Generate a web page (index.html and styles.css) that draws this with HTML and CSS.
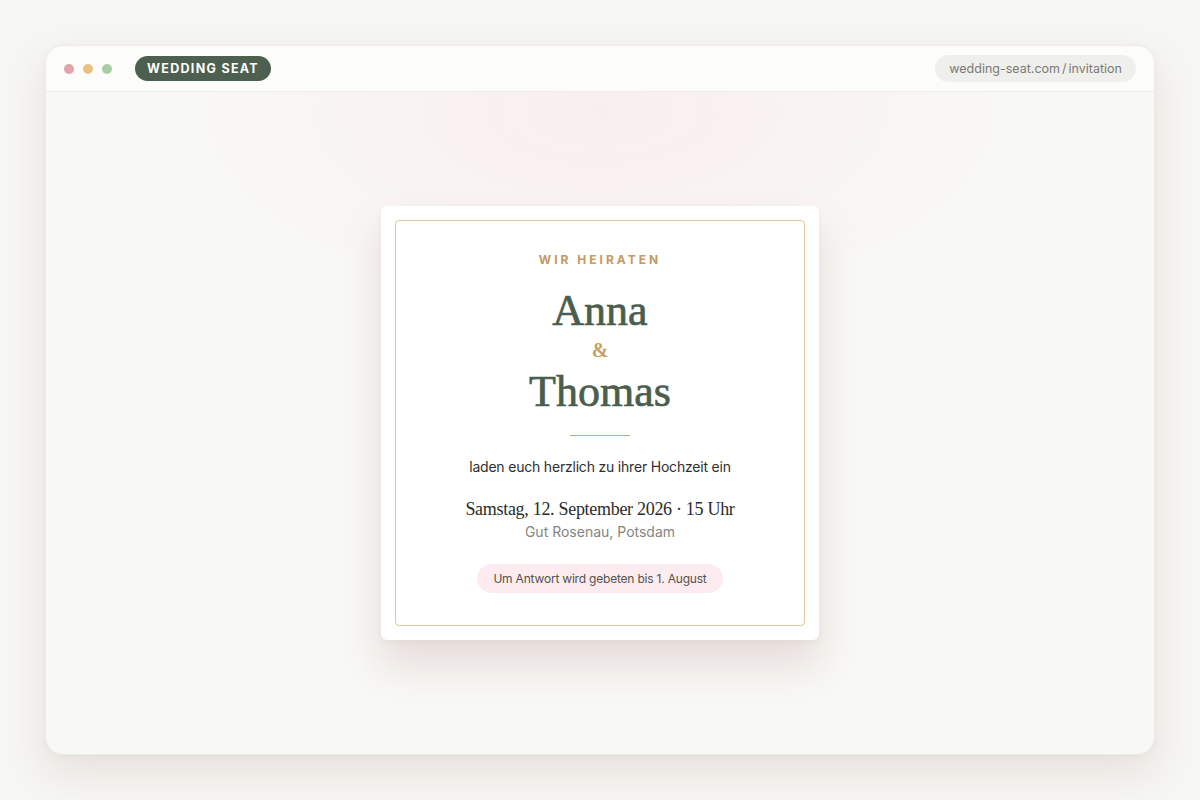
FILE: index.html
```html
<!DOCTYPE html>
<html lang="de">
<head>
<meta charset="utf-8">
<title>Wedding Seat – Einladung</title>
<link rel="stylesheet" href="styles.css">
</head>
<body>
<div class="window">
  <header class="titlebar">
    <div class="dots">
      <span class="dot dot-red"></span>
      <span class="dot dot-yellow"></span>
      <span class="dot dot-green"></span>
    </div>
    <span class="brand">WEDDING SEAT</span>
    <span class="url">wedding-seat.com / invitation</span>
  </header>
  <main class="stage">
    <section class="card">
      <div class="card-inner">
        <p class="eyebrow">WIR HEIRATEN</p>
        <h1 class="name">Anna</h1>
        <p class="amp">&amp;</p>
        <h1 class="name">Thomas</h1>
        <div class="rule"></div>
        <p class="invite">laden euch herzlich zu ihrer Hochzeit ein</p>
        <p class="date">Samstag, 12. September 2026 · 15 Uhr</p>
        <p class="place">Gut Rosenau, Potsdam</p>
        <span class="rsvp">Um Antwort wird gebeten bis 1. August</span>
      </div>
    </section>
  </main>
</div>
</body>
</html>
```

FILE: styles.css
```css
* { box-sizing: border-box; }
html, body { margin: 0; padding: 0; }
body {
  width: 1200px;
  height: 800px;
  padding: 45px;
  background: #f6f6f2;
  font-family: "Inter", "Liberation Sans", sans-serif;
  overflow: hidden;
}
.window {
  width: 1110px;
  height: 710px;
  border-radius: 18px;
  background: #f8f8f4;
  border: 1px solid #ecebe6;
  box-shadow: 0 18px 40px rgba(150, 100, 105, 0.14), 0 2px 6px rgba(0,0,0,0.03);
  display: flex;
  flex-direction: column;
  overflow: hidden;
}
.titlebar {
  height: 46px;
  flex: none;
  display: flex;
  align-items: center;
  padding: 0 18px 0 18px;
  background: #fcfcfa;
  border-bottom: 1px solid #efeee9;
}
.dots { display: flex; gap: 9px; }
.dot { width: 10px; height: 10px; border-radius: 50%; display: block; }
.dot-red { background: #e2a3ab; }
.dot-yellow { background: #e9c283; }
.dot-green { background: #a9cda5; }
.brand {
  margin-left: 23px;
  height: 25px;
  padding: 0 12px;
  border-radius: 13px;
  background: #4d5f4f;
  color: #ffffff;
  font-size: 12.5px;
  font-weight: 700;
  letter-spacing: 1.3px;
  display: flex;
  align-items: center;
}
.url {
  margin-left: auto;
  height: 27px;
  padding: 0 14px;
  border-radius: 14px;
  background: #efefeb;
  color: #7a7a76;
  font-size: 12.5px;
  word-spacing: -1.5px;
  display: flex;
  align-items: center;
}
.stage {
  flex: 1;
  display: flex;
  align-items: center;
  justify-content: center;
  background: radial-gradient(ellipse 420px 200px at 50% 20px, rgba(250, 230, 234, 0.55), rgba(248, 248, 244, 0) 100%);
}
.card {
  width: 438px;
  height: 434px;
  padding: 14px;
  background: #ffffff;
  border-radius: 6px;
  box-shadow: 0 24px 40px rgba(150, 90, 100, 0.18), 0 2px 6px rgba(0,0,0,0.04);
}
.card-inner {
  height: 100%;
  border: 1px solid #e2c9a0;
  border-radius: 4px;
  display: flex;
  flex-direction: column;
  align-items: center;
  padding-top: 31px;
  text-align: center;
}
.eyebrow {
  margin: 0;
  color: #c49a5f;
  font-size: 12px;
  font-weight: 700;
  letter-spacing: 3px;
  line-height: 16px;
}
.name {
  margin: 0;
  font-family: "Liberation Serif", serif;
  font-weight: 400;
  font-size: 44px;
  line-height: 50px;
  color: #4a5e4e;
  -webkit-text-stroke: 0.7px #4a5e4e;
}
.eyebrow + .name { margin-top: 18px; }
.amp {
  margin: 0 0 3px;
  font-family: "Liberation Serif", serif;
  font-weight: 700;
  font-size: 20px;
  line-height: 28px;
  color: #c9a063;
}
.rule {
  width: 60px;
  height: 1px;
  background: #d3a767;
  margin-top: 18px;
}
.invite {
  margin: 21px 0 0;
  font-size: 14px;
  line-height: 20px;
  color: #2f2f2f;
  letter-spacing: -0.2px;
}
.date {
  margin: 20px 0 0;
  font-family: "Liberation Serif", serif;
  font-size: 18px;
  letter-spacing: -0.3px;
  line-height: 24px;
  color: #2b2b2b;
}
.place {
  margin: 1px 0 0;
  font-size: 14px;
  line-height: 20px;
  color: #858580;
}
.rsvp {
  margin-top: 22px;
  height: 29px;
  padding: 0 16px;
  border-radius: 15px;
  background: #fcecf0;
  color: #55524f;
  font-size: 12px;
  letter-spacing: -0.2px;
  display: flex;
  align-items: center;
}
```
